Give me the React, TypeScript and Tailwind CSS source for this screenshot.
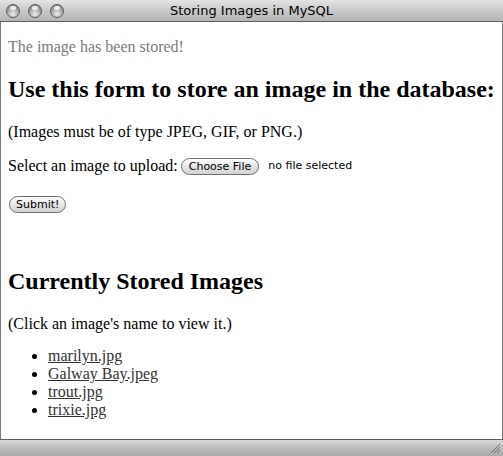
const files = ['marilyn.jpg', 'Galway Bay.jpeg', 'trout.jpg', 'trixie.jpg'];

const Light = () => (
  <span className="w-[14px] h-[14px] rounded-full border border-[#5c5c5c] bg-[radial-gradient(circle_at_50%_75%,#eeeeee_0%,#a9a9a9_50%,#6e6e6e_100%)] relative">
    <span className="absolute left-[3px] top-[1px] w-[6px] h-[4px] rounded-full bg-white/80"></span>
  </span>
);

const App = () => {
  return (
    <div className="w-[503px] h-[456px] flex flex-col bg-white overflow-hidden font-['Liberation_Serif',serif] text-black">
      {/* title bar */}
      <div className="h-[22px] shrink-0 relative flex items-center border-b border-[#5e5e5e] bg-[linear-gradient(180deg,#e4e4e4_0%,#c9c9c9_50%,#b4b4b4_100%)]">
        <div className="flex gap-[8px] pl-[6px]">
          <Light />
          <Light />
          <Light />
        </div>
        <span className="absolute inset-0 flex items-center justify-center text-[13px] text-black font-['Lucida_Grande','DejaVu_Sans',sans-serif]">
          Storing Images in MySQL
        </span>
      </div>

      {/* page */}
      <div className="flex-1 border-x border-[#7a7a7a] pl-[7px] pr-2 overflow-hidden">
        <p className="mt-4 mb-4 text-[16px] leading-[18px] text-[#7b7b7b]">The image has been stored!</p>
        <h2 className="my-5 text-[24px] leading-[27px] font-bold whitespace-nowrap">
          Use this form to store an image in the database:
        </h2>
        <p className="mb-4 text-[16px] leading-[18px]">(Images must be of type JPEG, GIF, or PNG.)</p>
        <p className="mb-4 text-[16px] leading-[18px] flex items-center">
          Select an image to upload:
          <span className="ml-[3px] h-[17px] px-[7px] rounded-full border border-[#6f6f6f] bg-[linear-gradient(180deg,#ffffff_0%,#e6e6e6_50%,#d2d2d2_100%)] text-[11px] leading-[15px] font-['DejaVu_Sans',sans-serif]">
            Choose File
          </span>
          <span className="ml-[9px] text-[11px] font-['DejaVu_Sans',sans-serif]">no file selected</span>
        </p>
        <div className="mb-[53px] pl-px">
          <span className="inline-block h-[17px] px-[6px] rounded-full border border-[#6f6f6f] bg-[linear-gradient(180deg,#ffffff_0%,#e6e6e6_50%,#d2d2d2_100%)] text-[11px] leading-[15px] font-['DejaVu_Sans',sans-serif]">
            Submit!
          </span>
        </div>
        <h2 className="mb-5 text-[24px] leading-[27px] font-bold">Currently Stored Images</h2>
        <p className="mb-[14px] text-[16px] leading-[18px]">(Click an image's name to view it.)</p>
        <ul className="list-disc pl-10 text-[16px] leading-[18px]">
          {files.map((f) => (
            <li key={f}>
              <a className="underline text-[#333]">{f}</a>
            </li>
          ))}
        </ul>
      </div>

      {/* bottom bar */}
      <div className="h-[17px] shrink-0 relative border-t border-[#5e5e5e] bg-[linear-gradient(180deg,#d8d8d8_0%,#bdbdbd_50%,#a9a9a9_100%)]">
        <svg className="absolute right-[2px] bottom-[2px]" width="11" height="11" viewBox="0 0 11 11">
          <path d="M10 1 L1 10 M10 4 L4 10 M10 7 L7 10" stroke="#6e6e6e" strokeWidth="1" />
        </svg>
      </div>
    </div>
  );
};

export default App;
